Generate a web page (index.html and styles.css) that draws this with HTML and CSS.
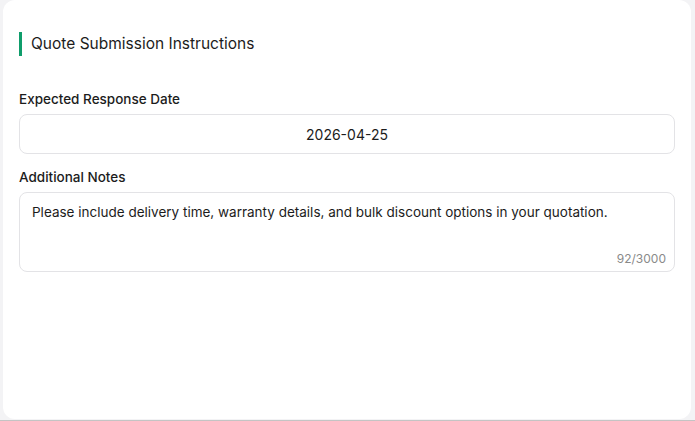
FILE: index.html
```html
<!DOCTYPE html>
<html lang="en">

<head>
    <meta charset="UTF-8">
    <meta name="viewport" content="width=device-width, initial-scale=1.0">
    <title>Quote Submission</title>
    <link rel="stylesheet" href="styles.css">
</head>

<body>
    <div class="card">
        <h2 class="section-title">Quote Submission Instructions</h2>

        <div class="form-group">
            <label for="responseDate">Expected Response Date</label>
            <div class="date-field" id="responseDate">2026-04-25</div>
        </div>

        <div class="form-group">
            <label for="notes">Additional Notes</label>
            <div class="notes-field">
                <div class="notes-text" id="notes">Please include delivery time, warranty details, and bulk discount options in your quotation.</div>
                <span class="counter">92/3000</span>
            </div>
        </div>
    </div>
</body>

</html>
```

FILE: styles.css
```css
html, body {
    margin: 0;
    padding: 0;
}

body {
    font-family: Inter, "Noto Sans", sans-serif;
    background-color: #f3f3f5;
    color: #1c1c1c;
    height: 420px;
    border-bottom: 1px solid #c4c4c4;
    overflow: hidden;
}

.card {
    background-color: #fff;
    margin-left: 3px;
    width: 688px;
    height: 419px;
    border-radius: 12px;
    box-sizing: border-box;
    padding: 32px 16px 0 16px;
}

.section-title {
    margin: 0 0 33px 0;
    font-size: 15.5px;
    font-weight: 400;
    line-height: 24px;
    border-left: 3px solid #0f9d6b;
    padding-left: 9px;
}

.form-group {
    margin-bottom: 13px;
}

.form-group label {
    display: block;
    font-size: 13.5px;
    font-weight: 500;
    line-height: 20px;
    margin-bottom: 5px;
}

.date-field {
    height: 40px;
    box-sizing: border-box;
    border: 1px solid #e3e3e6;
    border-radius: 8px;
    display: flex;
    align-items: center;
    justify-content: center;
    font-size: 14px;
}

.notes-field {
    position: relative;
    height: 80px;
    box-sizing: border-box;
    border: 1px solid #e3e3e6;
    border-radius: 8px;
    padding: 9px 12px;
}

.notes-text {
    font-size: 13.5px;
    line-height: 20px;
}

.counter {
    position: absolute;
    right: 8px;
    bottom: 5px;
    font-size: 12px;
    color: #8a8a8a;
}
```
